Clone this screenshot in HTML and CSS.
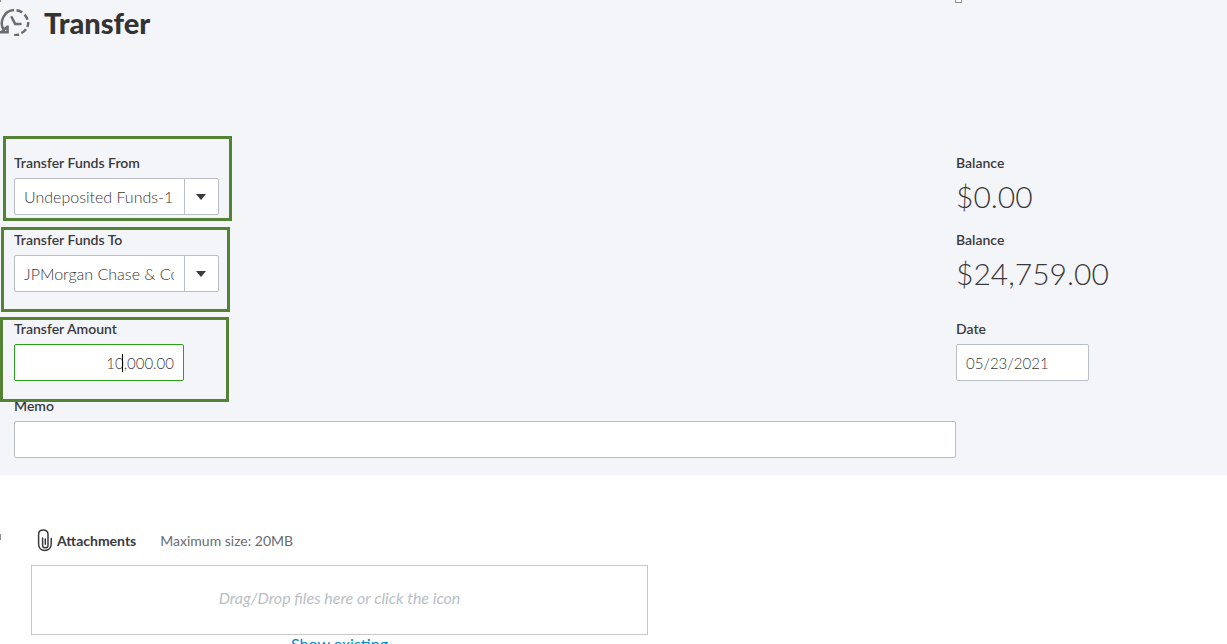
FILE: index.html
```html
<!DOCTYPE html>
<html lang="en">
<head>
<meta charset="utf-8">
<meta name="viewport" content="width=device-width, initial-scale=1">
<title>Transfer</title>
<link rel="stylesheet" href="styles.css">
</head>
<body>
<main class="page">
  <section class="panel">
    <span class="handle handle-top"></span>
    <span class="handle handle-corner"></span>
    <header class="header">
      <svg class="history" viewBox="0 0 30 36" fill="none" stroke="#6b6c72" stroke-width="2.5" aria-hidden="true">
        <path d="M3.6 29.5C1.6 26.5 1.2 21.5 3.3 17.2C5.3 13 9.5 10.3 14 10.1"/>
        <path d="M16.5 10.2C18.5 10.5 20.6 11.3 22.2 12.4M24.5 14.6C26 16.2 27 17.9 27.5 19.8M28.2 22C28.3 23.8 28 25.4 27.3 27M26 29.1C24.7 31 23.2 32.3 21.4 33.2M19 34.5C17.4 35.1 15.8 35.3 14.1 35.1"/>
        <path d="M0 32.2H7.6V25.5M2 31.5L7 27"/>
        <path d="M11.2 16.2L15.2 24H21.5"/>
      </svg>
      <h1 class="title">Transfer</h1>
    </header>
    <form class="form">
      <div class="row">
        <div class="field">
          <span class="mark mark-from"></span>
          <label class="label" for="from">Transfer Funds From</label>
          <div class="picker">
            <select class="control" id="from"><option>Undeposited Funds-1</option></select>
            <svg class="arrow" viewBox="0 0 10 6" aria-hidden="true"><path d="M0 0H10L5 6Z" fill="#393a3d"/></svg>
          </div>
        </div>
        <div class="field">
          <span class="label">Balance</span>
          <output class="amount">$0.00</output>
        </div>
      </div>
      <div class="row">
        <div class="field">
          <span class="mark mark-to"></span>
          <label class="label" for="to">Transfer Funds To</label>
          <div class="picker">
            <select class="control" id="to"><option>JPMorgan Chase &amp; Co. Checking</option></select>
            <svg class="arrow" viewBox="0 0 10 6" aria-hidden="true"><path d="M0 0H10L5 6Z" fill="#393a3d"/></svg>
          </div>
        </div>
        <div class="field">
          <span class="label">Balance</span>
          <output class="amount">$24,759.00</output>
        </div>
      </div>
      <div class="row row-spaced">
        <div class="field">
          <label class="label" for="amount">Transfer Amount</label>
          <div class="money">
            <input class="control control-number control-active" id="amount" type="text" value="10,000.00">
            <span class="caret"></span>
          </div>
          <span class="mark mark-amount"></span>
        </div>
        <div class="field">
          <label class="label" for="date">Date</label>
          <input class="control control-number control-date" id="date" type="text" value="05/23/2021">
        </div>
      </div>
      <div class="row">
        <div class="field">
          <label class="label" for="memo">Memo</label>
          <input class="control" id="memo" type="text">
        </div>
      </div>
    </form>
  </section>
  <section class="attachments">
    <span class="handle handle-left"></span>
    <div class="attach-head">
      <svg class="clip" viewBox="0 0 16 24" fill="none" stroke="#393a3d" stroke-width="1.5" stroke-linecap="round" aria-hidden="true">
        <path d="M11 7V16.2C11 17.9 10 18.8 8.4 18.8S5.6 17.9 5.6 16.2V9M11 7V5.2C11 2.7 9 1 6.3 1S1.6 2.7 1.6 5.2V15C1.6 19 4.2 21.4 7.8 21.4S14.2 19 14.2 15V9.5M8.3 10V15.3"/>
      </svg>
      <h2 class="attach-title">Attachments</h2>
      <span class="attach-size">Maximum size: 20MB</span>
    </div>
    <button class="drop" type="button">Drag/Drop files here or click the icon</button>
    <a class="existing" href="#">Show existing</a>
  </section>
</main>
</body>
</html>
```
FILE: styles.css
```css
* { box-sizing: border-box; }

body {
  margin: 0;
  background: #fff;
  color: #393a3d;
  font: 14px/20px Lato, "Liberation Sans", sans-serif;
}

.page {
  height: 100vh;
  overflow: hidden;
}

.panel {
  position: relative;
  background: #f4f5f8;
  padding-bottom: 17px;
}

.header {
  display: flex;
  align-items: center;
  gap: 14px;
  height: 46px;
  margin-bottom: 107px;
}

.history {
  width: 30px;
  height: 36px;
  align-self: flex-start;
  flex: none;
}

.title {
  margin: 0;
  color: #333;
  font-size: 29px;
  line-height: 36px;
  font-weight: 900;
}

.form {
  display: flex;
  flex-direction: column;
  gap: 15px;
  padding-left: 14px;
}

.row {
  display: grid;
  grid-template-columns: minmax(0, 1fr) 271px;
}

.row-spaced { margin-top: 12px; }

.field {
  position: relative;
  display: flex;
  flex-direction: column;
  align-items: flex-start;
  gap: 5px;
}

.label { font-weight: 600; }

.control {
  width: 100%;
  height: 37px;
  padding: 0 9px;
  border: 1px solid #babec5;
  border-radius: 2px;
  background: #fff;
  color: #393a3d;
  font: 300 16px/20px Lato, "Liberation Sans", sans-serif;
  appearance: none;
  outline: none;
}

.control-number { font-size: 15px; }

.picker {
  position: relative;
  width: 205px;
}

.picker .control {
  display: block;
  padding-right: 44px;
}

.picker::after {
  content: "";
  position: absolute;
  top: 0;
  right: 34px;
  width: 1px;
  height: 100%;
  background: #babec5;
}

.arrow {
  position: absolute;
  top: 16px;
  right: 13px;
  width: 10px;
  height: 6px;
  pointer-events: none;
}

.money {
  position: relative;
  width: 170px;
}

.control-active {
  display: block;
  border-color: #2ca01c;
  text-align: right;
}

.caret {
  position: absolute;
  top: 10px;
  right: 61px;
  width: 1px;
  height: 18px;
  background: #000;
}

.control-date { width: 133px; }

.amount {
  font-size: 30px;
  line-height: 37px;
  font-weight: 300;
}

/* Step highlights drawn over the fields */
.mark {
  position: absolute;
  width: 229px;
  height: 85px;
  border: 3px solid #548235;
  pointer-events: none;
}

.mark-from { top: -17px; left: -11px; }
.mark-to { top: -3px; left: -13px; }
.mark-amount { top: -2px; left: -14px; z-index: 1; }

.handle {
  position: absolute;
  border: 1px solid #8c8d91;
}

.handle-top {
  top: 0;
  left: 955px;
  width: 7px;
  height: 3px;
  border-top: 0;
  background: #fff;
}

.handle-corner {
  top: 0;
  left: 0;
  width: 1px;
  height: 2px;
  border-width: 0 0 0 1px;
}

.handle-left {
  top: 59px;
  left: 0;
  width: 1px;
  height: 6px;
  border-width: 0 0 0 1px;
}

.attachments {
  position: relative;
  display: flex;
  flex-direction: column;
  align-items: flex-start;
  width: 648px;
  max-width: 100%;
  padding: 54px 0 0 31px;
}

.attach-head {
  display: flex;
  align-items: center;
  height: 24px;
  margin: 0 0 12px 6px;
}

.clip {
  width: 16px;
  height: 24px;
  margin-right: 4px;
}

.attach-title {
  margin: 0 24px 0 0;
  font-size: 14px;
  line-height: 20px;
  font-weight: 700;
}

.attach-size {
  color: #6b6c72;
}

.drop {
  width: 100%;
  height: 70px;
  padding: 0 0 5px;
  border: 1px solid #c7c7c7;
  background: #fff;
  color: #babec5;
  font: italic 16px/20px Lato, "Liberation Sans", sans-serif;
}

.existing {
  align-self: center;
  color: #0088d1;
  font-size: 16px;
  line-height: 18px;
  text-decoration: none;
}
```
